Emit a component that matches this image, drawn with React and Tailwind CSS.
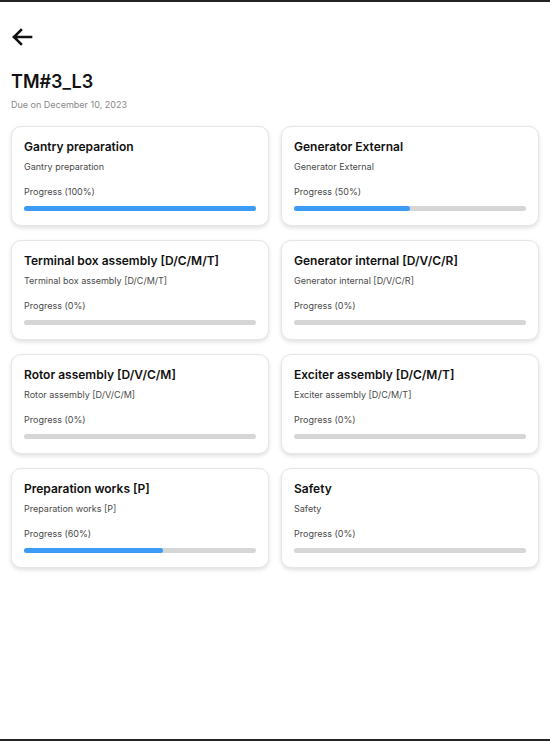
import React from 'react';

const tasks = [
  { title: 'Gantry preparation', sub: 'Gantry preparation', pct: 100 },
  { title: 'Generator External', sub: 'Generator External', pct: 50 },
  { title: 'Terminal box assembly [D/C/M/T]', sub: 'Terminal box assembly [D/C/M/T]', pct: 0 },
  { title: 'Generator internal [D/V/C/R]', sub: 'Generator internal [D/V/C/R]', pct: 0 },
  { title: 'Rotor assembly [D/V/C/M]', sub: 'Rotor assembly [D/V/C/M]', pct: 0 },
  { title: 'Exciter assembly [D/C/M/T]', sub: 'Exciter assembly [D/C/M/T]', pct: 0 },
  { title: 'Preparation works [P]', sub: 'Preparation works [P]', pct: 60 },
  { title: 'Safety', sub: 'Safety', pct: 0 },
];

const TaskCard = ({ task }) => (
  <div className="h-[100px] min-w-0 rounded-[10px] border border-[#e6e6e6] bg-white px-3 pt-[12px] shadow-[0_2px_4px_rgba(0,0,0,0.13)]">
    <div className="text-[12px] font-semibold leading-[16px] text-[#111]">{task.title}</div>
    <div className="mt-[6px] text-[9px] leading-[12px] text-[#4a4a4a]">{task.sub}</div>
    <div className="mt-[13px] text-[9px] leading-[12px] text-[#4a4a4a]">Progress ({task.pct}%)</div>
    <div className="mt-[8px] h-[5px] w-full rounded-full bg-[#d6d6d6]">
      <div className="h-full rounded-full bg-[#3b9bf5]" style={{ width: `${task.pct}%` }} />
    </div>
  </div>
);

export default function App() {
  return (
    <div className="h-[741px] w-full border-y-2 border-[#242424] bg-white font-['Inter','Noto_Sans',sans-serif]">
      <div className="w-full px-[11px] pt-[26px]">
        <svg width="22" height="18" viewBox="0 0 22 18">
          <path d="M20 9H3M10 2L3 9l7 7" fill="none" stroke="#111" strokeWidth="2.6" strokeLinecap="square" />
        </svg>
        <h1 className="mt-[24px] text-[18px] font-semibold leading-[24px] text-[#111]">TM#3_L3</h1>
        <div className="mt-[4px] text-[9px] leading-[14px] text-[#888]">Due on December 10, 2023</div>
        <div className="mt-[14px] grid w-full grid-cols-2 gap-x-[12px] gap-y-[14px]">
          {tasks.map((t) => (
            <TaskCard key={t.title} task={t} />
          ))}
        </div>
      </div>
    </div>
  );
}
